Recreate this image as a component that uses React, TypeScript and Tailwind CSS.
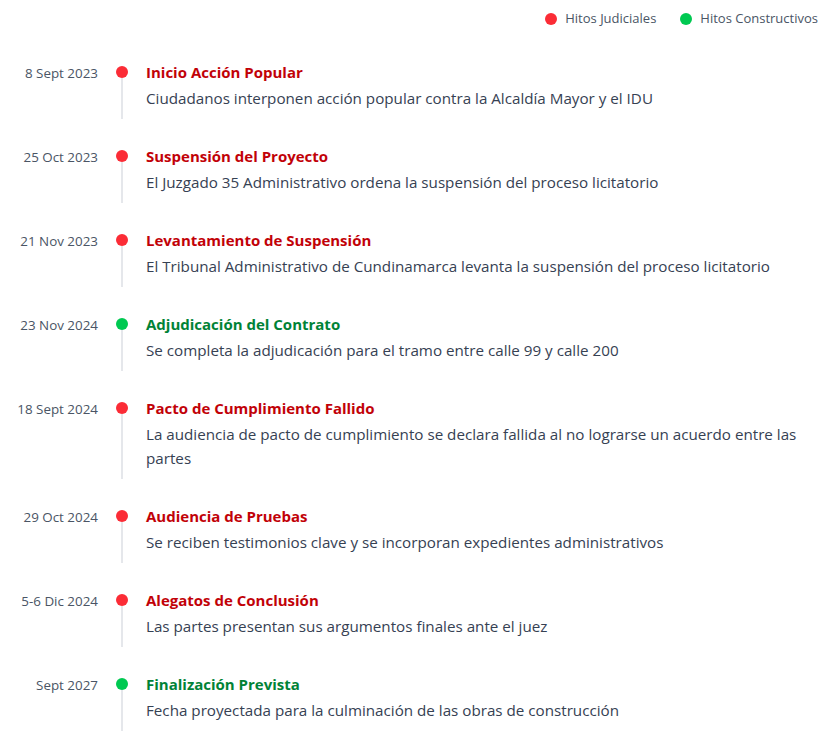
const items = [
  { date: '8 Sept 2023', title: 'Inicio Acción Popular', desc: 'Ciudadanos interponen acción popular contra la Alcaldía Mayor y el IDU', type: 'j' },
  { date: '25 Oct 2023', title: 'Suspensión del Proyecto', desc: 'El Juzgado 35 Administrativo ordena la suspensión del proceso licitatorio', type: 'j' },
  { date: '21 Nov 2023', title: 'Levantamiento de Suspensión', desc: 'El Tribunal Administrativo de Cundinamarca levanta la suspensión del proceso licitatorio', type: 'j' },
  { date: '23 Nov 2024', title: 'Adjudicación del Contrato', desc: 'Se completa la adjudicación para el tramo entre calle 99 y calle 200', type: 'c' },
  { date: '18 Sept 2024', title: 'Pacto de Cumplimiento Fallido', desc: 'La audiencia de pacto de cumplimiento se declara fallida al no lograrse un acuerdo entre las partes', type: 'j' },
  { date: '29 Oct 2024', title: 'Audiencia de Pruebas', desc: 'Se reciben testimonios clave y se incorporan expedientes administrativos', type: 'j' },
  { date: '5-6 Dic 2024', title: 'Alegatos de Conclusión', desc: 'Las partes presentan sus argumentos finales ante el juez', type: 'j' },
  { date: 'Sept 2027', title: 'Finalización Prevista', desc: 'Fecha proyectada para la culminación de las obras de construcción', type: 'c' },
];

export default function App() {
  return (
    <div className="bg-white min-h-screen pr-[10px]" style={{ fontFamily: '"Open Sans", "Noto Sans", sans-serif' }}>
      <div className="flex justify-end items-center gap-6 pt-[9px] text-[13px] text-gray-600">
        <div className="flex items-center gap-2">
          <span className="w-3 h-3 rounded-full bg-red-500" />
          Hitos Judiciales
        </div>
        <div className="flex items-center gap-2">
          <span className="w-3 h-3 rounded-full bg-green-500" />
          Hitos Constructivos
        </div>
      </div>
      <div className="mt-[33px] flex flex-col gap-[27px]">
        {items.map((it, i) => (
          <div key={i} className="flex">
            <div className="w-[98px] text-right text-[13.4px] text-gray-600 leading-5 pt-[1px] shrink-0">{it.date}</div>
            <div className="w-12 shrink-0 flex flex-col items-center">
              <span className={`mt-[4px] w-3 h-3 rounded-full ${it.type === 'j' ? 'bg-red-500' : 'bg-green-500'}`} />
              <span className="flex-1 w-0.5 bg-gray-200" />
            </div>
            <div className="pb-[9px] max-w-[660px]">
              <div className={`text-[15px] font-bold leading-5 ${it.type === 'j' ? 'text-red-700' : 'text-green-700'}`}>{it.title}</div>
              <div className="mt-1 text-[15.2px] leading-6 text-gray-700">{it.desc}</div>
            </div>
          </div>
        ))}
      </div>
    </div>
  );
}
